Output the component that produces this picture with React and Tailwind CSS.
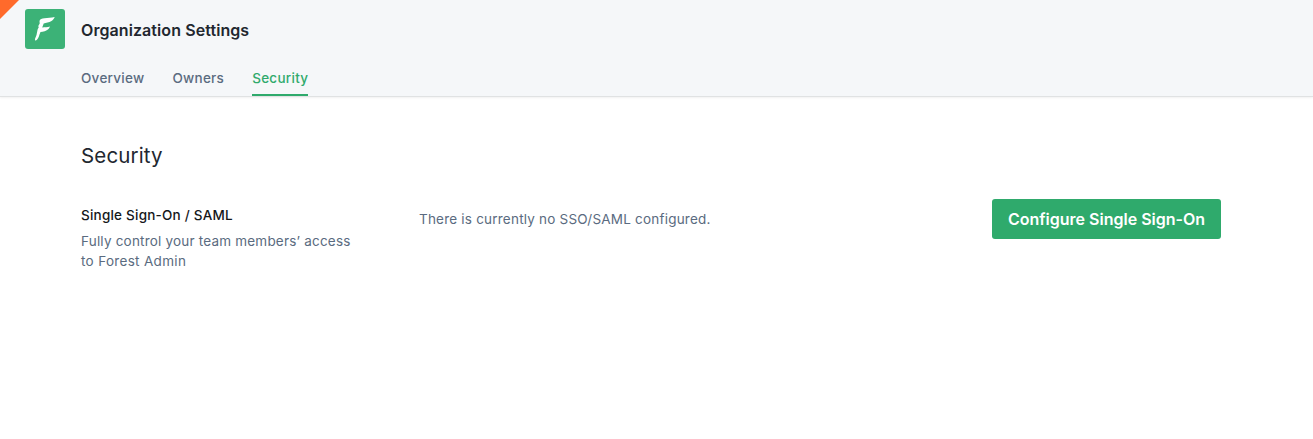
export default function App() {
  return (
    <div className="relative h-[439px] w-[1313px] overflow-hidden bg-white font-['Inter',sans-serif] text-[#22272f]">
      <header className="flex h-[97px] flex-col border-b border-[#e0e2e3] bg-[#f5f7f9] shadow-[0_1px_2px_rgba(0,0,0,0.06)]">
        <div className="flex items-center gap-4 pt-[9px] pl-[25px]">
          <div className="size-10 rounded-[3px] bg-[#3cb277]">
            <svg viewBox="0 0 40 40" className="size-10">
              <path d="M29.700 7.900C26 9 23 8.500 19.500 9.200C17 9.300 14.800 10 14.500 12L14.700 14.500L13.300 17L13.700 18.500C12.300 20 12.500 22 11.900 24C11.700 27 10 29 9.900 30.500L10.500 31.700C12.700 31 13.800 28 14.500 25.500L15.500 23C18 22.500 21.500 22.200 23.500 20C24.300 19 24.700 18.300 24.900 17.400C22.500 18.300 20 17.900 17.200 18.600L18.700 14.400C21 13.600 24 13.800 26.500 12C28 11 29 9.500 29.700 7.900Z" fill="#fff" />
            </svg>
          </div>
          <h1 className="pt-[2px] text-base leading-6 font-semibold tracking-[0.08px]">Organization Settings</h1>
        </div>
        <nav className="flex h-[47px] gap-7 pt-[19px] pl-[81px] text-[13.5px] font-medium tracking-[0.27px] text-[#5a6b80]">
          <span className="leading-5">Overview</span>
          <span className="leading-5">Owners</span>
          <span className="h-7 border-b-2 border-[#2faa6c] leading-5 text-[#2faa6c]">Security</span>
        </nav>
      </header>
      <div className="absolute top-0 left-0 size-[19px] bg-[#ff6a2b] [clip-path:polygon(0_0,100%_0,0_100%)]" />
      <main className="pt-[43px] pl-[81px]">
        <h2 className="text-[20.5px] leading-8 tracking-[0.15px]">Security</h2>
        <section className="mt-[27px] flex">
          <div className="w-[338px] pt-[6px]">
            <h3 className="text-[13.5px] leading-5 font-medium tracking-[0.22px] text-[#15171a]">Single Sign-On / SAML</h3>
            <p className="mt-[6px] text-[13.5px] leading-5 tracking-[0.2px] text-[#5a6b80]">Fully control your team members’ access<br /><span className="tracking-[0.32px]">to Forest Admin</span></p>
          </div>
          <p className="w-[573px] pt-[10px] text-[13.5px] leading-5 tracking-[0.21px] text-[#5a6b80]">There is currently no SSO/SAML configured.</p>
          <button className="h-10 w-[229px] rounded-[3px] bg-[#2faa6c] text-base font-semibold text-white">Configure Single Sign-On</button>
        </section>
      </main>
    </div>
  );
}
